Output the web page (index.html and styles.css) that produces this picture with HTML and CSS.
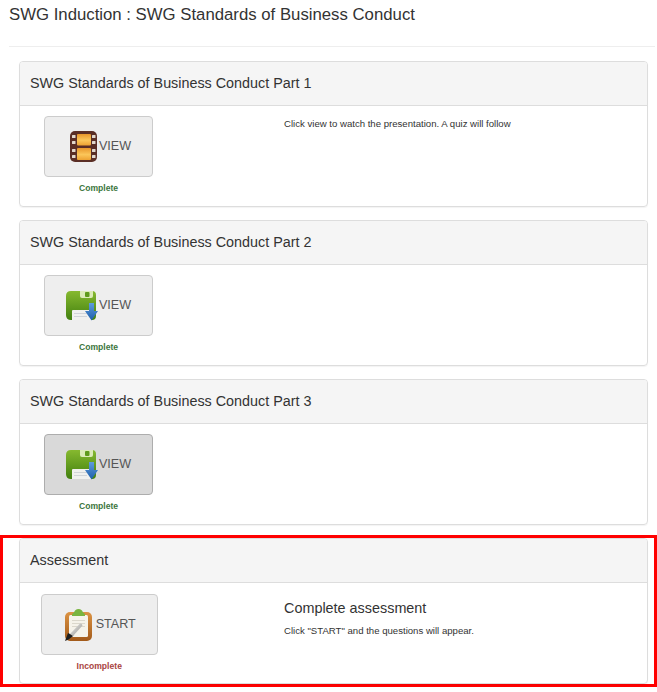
FILE: index.html
```html
<!DOCTYPE html>
<html lang="en">
<head>
    <meta charset="UTF-8">
    <title>SWG Induction</title>
    <link rel="stylesheet" href="styles.css">
</head>
<body>
    <svg class="defs" width="0" height="0">
        <defs>
            <linearGradient id="gold" x1="0" y1="0" x2="0" y2="1">
                <stop offset="0" stop-color="#e8962a"/>
                <stop offset=".55" stop-color="#fbc65a"/>
                <stop offset="1" stop-color="#eda232"/>
            </linearGradient>
            <linearGradient id="green" x1="0" y1="0" x2="0" y2="1">
                <stop offset="0" stop-color="#86b92f"/>
                <stop offset="1" stop-color="#42800f"/>
            </linearGradient>
            <linearGradient id="blue" x1="0" y1="0" x2="0" y2="1">
                <stop offset="0" stop-color="#5d9bdc"/>
                <stop offset="1" stop-color="#1f5fab"/>
            </linearGradient>
            <linearGradient id="wood" x1="0" y1="0" x2="0" y2="1">
                <stop offset="0" stop-color="#dc9343"/>
                <stop offset="1" stop-color="#a25a1a"/>
            </linearGradient>
            <linearGradient id="steel" x1="0" y1="0" x2="1" y2="1">
                <stop offset="0" stop-color="#f2f2f0"/>
                <stop offset="1" stop-color="#8e8e8a"/>
            </linearGradient>
            <symbol id="film" viewBox="0 0 32 32">
                <rect x="4" y="0" width="27" height="31" rx="5" fill="#5a2e25"/>
                <rect x="11" y="3" width="14" height="11.500" rx="1" fill="url(#gold)"/>
                <rect x="11" y="17" width="14" height="12" rx="1" fill="url(#gold)"/>
                <g fill="#e2d8cc">
                    <rect x="6" y="4" width="3.500" height="3" rx=".5"/>
                    <rect x="6" y="10" width="3.500" height="3" rx=".5"/>
                    <rect x="6" y="18" width="3.500" height="3" rx=".5"/>
                    <rect x="6" y="24" width="3.500" height="3" rx=".5"/>
                    <rect x="26" y="4" width="3.500" height="3" rx=".5"/>
                    <rect x="26" y="10" width="3.500" height="3" rx=".5"/>
                    <rect x="26" y="18" width="3.500" height="3" rx=".5"/>
                    <rect x="26" y="24" width="3.500" height="3" rx=".5"/>
                </g>
            </symbol>
            <symbol id="disk" viewBox="0 0 32 32">
                <path d="M5 1H26Q30 1 30 5V26Q30 30 26 30H5Q0 30 0 25V6Q0 1 5 1Z" fill="url(#green)"/>
                <path d="M14 1H27V6Q27 8 25 8H16Q14 8 14 6Z" fill="#dcebb8"/>
                <rect x="19" y="2" width="4.500" height="5" rx="1" fill="#5f9a1c"/>
                <path d="M6 21Q6 20 7 20H25V30H6Z" fill="#f1f1ef"/>
                <g fill="#d2d5d8">
                    <rect x="8" y="23" width="13" height="1"/>
                    <rect x="8" y="26" width="13" height="1"/>
                </g>
                <path d="M23 13H28V21H32L25.500 30.500L19 21H23Z" fill="url(#blue)"/>
            </symbol>
            <symbol id="clip" viewBox="0 0 32 32">
                <rect x="2" y="3" width="27" height="29" rx="5" fill="url(#wood)"/>
                <rect x="6" y="6" width="19" height="22" rx="1.500" fill="#f5f3ea"/>
                <g fill="#dbd8cc">
                    <rect x="9" y="11" width="13" height="1"/>
                    <rect x="9" y="14" width="13" height="1"/>
                    <rect x="9" y="17" width="13" height="1"/>
                </g>
                <path d="M9 6Q9 4 11 3.500Q12 0 15.500 0Q19 0 20 3.500Q22 4 22 6V7H9Z" fill="#79b53f"/>
                <path d="M7 25L17 14.500Q19 14 19.500 16.500L10 27Z" fill="url(#steel)"/>
                <path d="M2 32L5 24L7 25L10 27L11.500 26L5.500 30.500Z" fill="#1e1e1e"/>
            </symbol>
        </defs>
    </svg>

    <h1 class="page-title">SWG Induction : SWG Standards of Business Conduct</h1>
    <hr class="title-rule">

    <div class="panel">
        <div class="panel-heading">SWG Standards of Business Conduct Part 1</div>
        <div class="panel-body">
            <div class="action">
                <a class="btn" href="#"><svg class="icon"><use href="#film"/></svg><span>VIEW</span></a>
                <div class="status done">Complete</div>
            </div>
            <div class="info"><p class="note">Click view to watch the presentation. A quiz will follow</p></div>
        </div>
    </div>

    <div class="panel">
        <div class="panel-heading">SWG Standards of Business Conduct Part 2</div>
        <div class="panel-body">
            <div class="action">
                <a class="btn" href="#"><svg class="icon"><use href="#disk"/></svg><span>VIEW</span></a>
                <div class="status done">Complete</div>
            </div>
        </div>
    </div>

    <div class="panel">
        <div class="panel-heading">SWG Standards of Business Conduct Part 3</div>
        <div class="panel-body">
            <div class="action">
                <a class="btn hover" href="#"><svg class="icon"><use href="#disk"/></svg><span>VIEW</span></a>
                <div class="status done">Complete</div>
            </div>
        </div>
    </div>

    <div class="highlight">
        <div class="panel last">
            <div class="panel-heading">Assessment</div>
            <div class="panel-body">
                <div class="action wide">
                    <a class="btn" href="#"><svg class="icon"><use href="#clip"/></svg><span>START</span></a>
                    <div class="status todo">Incomplete</div>
                </div>
                <div class="info">
                    <h4 class="info-title">Complete assessment</h4>
                    <p class="note">Click "START" and the questions will appear.</p>
                </div>
            </div>
        </div>
    </div>
</body>
</html>
```

FILE: styles.css
```css
body {
    margin: 0;
    background: #fff;
    color: #333;
    font-family: "Liberation Sans", Arial, sans-serif;
    font-size: 14px;
}
.defs {
    display: block;
    height: 0;
}
.page-title {
    margin: 0;
    padding: 6px 0 0 9px;
    height: 40px;
    box-sizing: border-box;
    font-size: 16.75px;
    line-height: 18px;
    font-weight: 400;
}
.title-rule {
    margin: 6px 2px 14px 9px;
    border: 0;
    border-top: 1px solid #eee;
}
.panel {
    margin: 0 9px 13px 19px;
    height: 146px;
    box-sizing: border-box;
    border: 1px solid #ddd;
    border-radius: 4px;
    box-shadow: 0 1px 1px rgba(0, 0, 0, .05);
}
.panel-heading {
    height: 44px;
    box-sizing: border-box;
    padding: 0 10px;
    line-height: 42px;
    font-size: 14.35px;
    background: #f5f5f5;
    border-bottom: 1px solid #ddd;
    border-radius: 3px 3px 0 0;
}
.panel-body {
    display: flex;
    padding-top: 10px;
}
.action {
    margin-left: 24px;
    width: 109px;
    flex: none;
    text-align: center;
}
.action.wide {
    margin: 1px 0 0 21px;
    width: 116.5px;
}
.btn {
    display: flex;
    align-items: center;
    justify-content: center;
    height: 61px;
    box-sizing: border-box;
    background: #eee;
    border: 1px solid #ccc;
    border-radius: 4px;
    color: #555;
    font-size: 12.6px;
    text-decoration: none;
}
.btn span {
    margin-bottom: 2px;
}
.btn.hover {
    background: #d9d9d9;
    border-color: #adadad;
}
.icon {
    width: 32px;
    height: 32px;
    margin-right: 1px;
}
.status {
    margin-top: 6px;
    font-size: 8.6px;
    line-height: 11px;
    font-weight: 700;
}
.done {
    color: #3c763d;
}
.todo {
    color: #a94442;
}
.info {
    margin-left: 131px;
    padding-top: 1px;
}
.action.wide + .info {
    margin-left: 126.5px;
}
.note {
    margin: 0;
    font-size: 9.6px;
    line-height: 13px;
}
.info-title {
    margin: 6px 0 8px;
    font-size: 14.4px;
    line-height: 16px;
    font-weight: 400;
}
.highlight {
    margin-top: -3px;
    border: 3px solid #f00;
    padding: 0 6px 0 16px;
}
.panel.last {
    margin: 0;
}
```
